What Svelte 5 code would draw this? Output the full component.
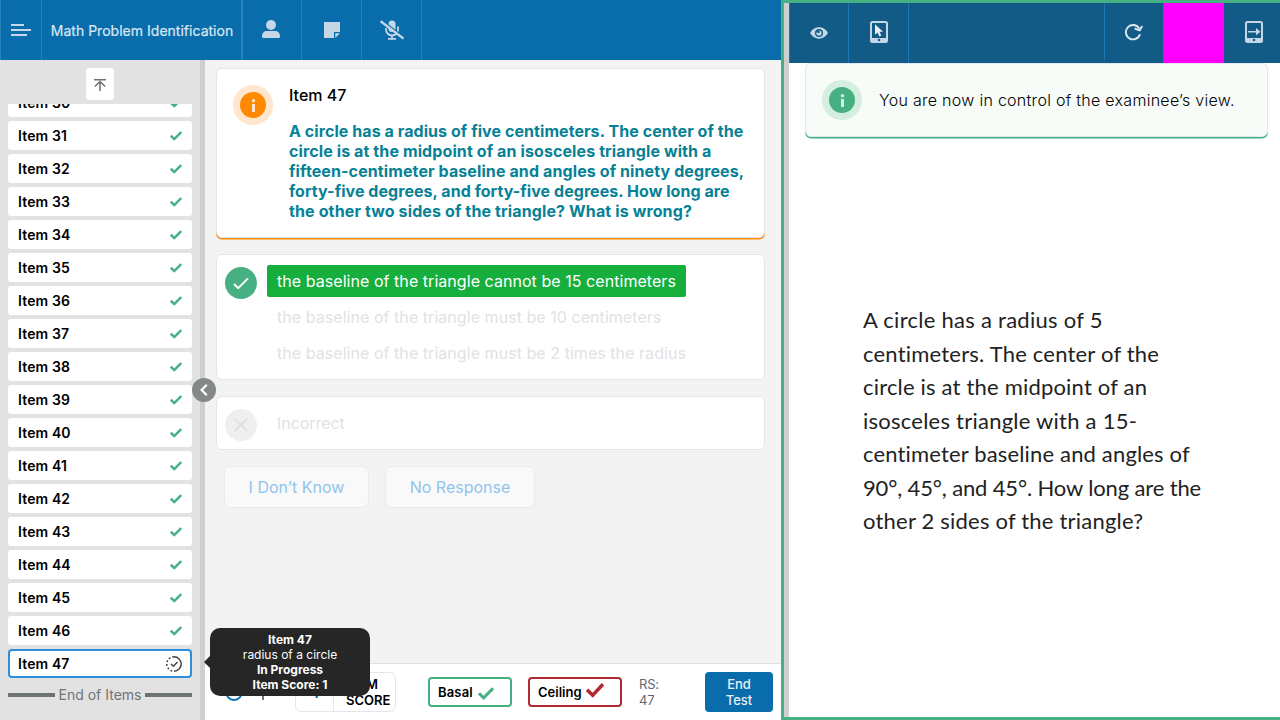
<script>
  const items = Array.from({ length: 18 }, (_, i) => 30 + i);
  const prompt = [
    ['A circle has a radius of five centimeters. The center of the', 0.068],
    ['circle is at the midpoint of an isosceles triangle with a', 0.107],
    ['fifteen-centimeter baseline and angles of ninety degrees,', 0.105],
    ['forty-five degrees, and forty-five degrees. How long are', 0.05],
    ['the other two sides of the triangle? What is wrong?', 0.125]
  ];
  const stimulus = [
    ['A circle has a radius of 5', 0.27],
    ['centimeters. The center of the', 0.21],
    ['circle is at the midpoint of an', 0.19],
    ['isosceles triangle with a 15-', 0.24],
    ['centimeter baseline and angles of', 0.16],
    ['90°, 45°, and 45°. How long are the', -0.14],
    ['other 2 sides of the triangle?', 0.21]
  ];
</script>

<div class="app">
  <main class="left">
    <header class="bar">
      <div class="cell menu">
        <svg width="20" height="12" viewBox="0 0 20 12"><path d="M0 1h13M0 6h20M0 11h16" stroke="#c5d9e9" stroke-width="2" /></svg>
      </div>
      <div class="cell title"><span>Math Problem Identification</span></div>
      <div class="cell sq person">
        <svg width="18" height="18" viewBox="0 0 18 18" fill="#c5d7e6"><circle cx="9" cy="5" r="5" /><path d="M0 16.500C0 13 2 11 5 11h8c3 0 5 2 5 5.500q0 1.500-1.500 1.500h-15Q0 18 0 16.500Z" /></svg>
      </div>
      <div class="cell sq">
        <svg width="16" height="16" viewBox="0 0 16 16" fill="#c5d7e6"><path d="M0 0h16v10h-6v6H0Z" /><path d="M11.300 11.300H16L11.300 16Z" /></svg>
      </div>
      <div class="cell sq">
        <svg width="24" height="20" viewBox="0 0 24 20" fill="none" stroke="#c5d7e6"><rect x="8.500" y="0.500" width="7" height="11.500" rx="3.500" fill="#c5d7e6" stroke="none" /><path d="M6 8v1.500a6 6 0 0 0 12 0V6.500M12 15.500V19M8 18.800h8" stroke-width="1.800" /><path d="M2 .2 25 18.200" stroke="#0a6dab" stroke-width="1.500" /><path d="M.6 1.200 23.500 18.600" stroke-width="2.200" /></svg>
      </div>
    </header>

    <div class="body">
      <nav class="side">
        <div class="top">
          <button class="up" aria-label="Top"><svg width="12" height="12" viewBox="0 0 12 12" fill="none" stroke="#6d7272" stroke-width="1.500"><path d="M0 .8h12M6 12V3M.8 7.500 6 2.600l5.200 4.900" /></svg></button>
        </div>
        <div class="list">
          {#each items as n}
            <div class="item" class:current={n === 47}>
              <span>Item {n}</span>
              {#if n === 47}
                <svg width="16" height="16" viewBox="0 0 16 16" fill="none" stroke="#444" stroke-width="1.500"><path d="M8 .8a7.200 7.200 0 0 1 0 14.400" /><path d="M8 .8a7.200 7.200 0 0 0 0 14.400" stroke-dasharray="1.800 1.970" /><path d="m5 8 2.300 2.300L11.500 6" /></svg>
              {:else}
                <svg width="12" height="10" viewBox="0 0 12 10" fill="none" stroke="#47b083" stroke-width="2.500"><path d="m.8 4.700 3.500 3.400L11.200 1" /></svg>
              {/if}
            </div>
          {/each}
          <div class="end"><i></i><span>End of Items</span><i></i></div>
        </div>
      </nav>
      <div class="split"></div>

      <section class="content">
        <div class="work">
          <article class="card question">
            <div class="halo"><b><svg width="5" height="13" viewBox="0 0 5 13" fill="#ffe6cc"><circle cx="2.500" cy="1.800" r="1.700" /><path d="M1 5h3v8H1Z" /></svg></b></div>
            <div class="qtext">
              <h1>Item 47</h1>
              <p>{#each prompt as [line, ls]}<span style="letter-spacing: {ls}px">{line}</span>{/each}</p>
            </div>
          </article>

          <article class="card answers">
            <div class="mark ok"><svg width="16" height="13" viewBox="0 0 16 13" fill="none" stroke="#fff" stroke-width="2"><path d="m1 7 4.200 4.200L15 1.400" /></svg></div>
            <div class="options">
              <div class="opt chosen">the baseline of the triangle cannot be 15 centimeters</div>
              <div class="opt">the baseline of the triangle must be 10 centimeters</div>
              <div class="opt">the baseline of the triangle must be 2 times the radius</div>
            </div>
          </article>

          <article class="card wrong">
            <div class="mark"><svg width="14" height="14" viewBox="0 0 14 14" stroke="#dfdfdf" stroke-width="1.700"><path d="m.8.800 12.400 12.400M13.200.800.800 13.200" /></svg></div>
            <span>Incorrect</span>
          </article>

          <div class="buttons">
            <button class="idk">I Don’t Know</button>
            <button class="nr">No Response</button>
          </div>
        </div>

        <footer>
          <svg class="clock" width="18" height="18" viewBox="0 0 18 18" fill="none" stroke="#0a6dab" stroke-width="2"><circle cx="9" cy="9" r="8" /></svg>
          <svg class="plus" width="14" height="18" viewBox="0 0 14 18" stroke="#444" stroke-width="1.500"><path d="M7 0v17" /></svg>
          <div class="score"><div class="num">1</div><div class="lab">ITEM<br />SCORE</div></div>
          <div class="pill basal">Basal<svg width="16" height="13" viewBox="0 0 16 13" fill="none" stroke="#47b083" stroke-width="3"><path d="m1 6.300 4.700 4.500L15 1.300" /></svg></div>
          <div class="pill ceil">Ceiling<svg width="18" height="15" viewBox="0 0 18 15" fill="none" stroke="#b02b2f" stroke-width="3.500"><path d="m1 6.800 5.700 5.500L17 1.300" /></svg></div>
          <div class="rs">RS:<br />47</div>
          <button class="finish">End<br />Test</button>
        </footer>
      </section>
    </div>

    <button class="collapse" aria-label="Collapse"><svg width="8" height="12" viewBox="0 0 8 12" fill="none" stroke="#fff" stroke-width="2.200"><path d="M6.800.800 1.600 6l5.200 5.200" /></svg></button>
    <div class="tip"><b>Item 47</b><span>radius of a circle</span><b>In Progress</b><b>Item Score: 1</b></div>
  </main>

  <aside class="right">
    <div class="gutter"></div>
    <div class="view">
      <header class="vbar">
        <div class="vcell"><svg width="18" height="12" viewBox="0 0 18 12"><path d="M0 6C2.500 2 5.500.300 9 .300S15.500 2 18 6c-2.500 4-5.500 5.700-9 5.700S2.500 10 0 6Z" fill="#c5d7e6" /><circle cx="9" cy="6" r="4" fill="#135b87" /><circle cx="9" cy="6" r="2.600" fill="#c5d7e6" /><circle cx="8.300" cy="4.800" r="1.400" fill="#135b87" /></svg></div>
        <div class="vcell tablet"><svg width="18" height="22" viewBox="0 0 18 22"><rect x="1" y="1" width="16" height="20" rx="1.500" fill="none" stroke="#c5d7e6" stroke-width="2" /><path d="M1 17h16v4H1Z" fill="#c5d7e6" /><circle cx="9" cy="19" r="1.300" fill="#135b87" /><path d="M5 3.200v10.500l2.500-2.200 1.800 4 2-.9-1.800-3.900H13Z" fill="#e8f0f6" /></svg></div>
        <div class="fill"></div>
        <div class="vcell refresh"><svg width="20" height="18" viewBox="0 0 20 18" fill="none" stroke="#dce8f1" stroke-width="1.900"><path d="M16 11.200A7.200 7.200 0 1 1 15.300 5.500" /><path d="m10.700 5.500 5 1.800L18.300 3" /></svg></div>
        <div class="pink"></div>
        <div class="vcell last"><svg width="18" height="22" viewBox="0 0 18 22"><rect x="1" y="1" width="16" height="20" rx="1.500" fill="none" stroke="#c5d7e6" stroke-width="2" /><path d="M1 17h16v4H1Z" fill="#c5d7e6" /><circle cx="9" cy="19" r="1.300" fill="#135b87" /><path d="M3 10h8V7l4.500 3.700-4.500 3.500v-2.700H3Z" fill="#c5d7e6" /></svg></div>
      </header>
      <div class="notice">
        <div class="halo green"><b><svg width="5" height="13" viewBox="0 0 5 13" fill="#d4eee0"><circle cx="2.500" cy="1.800" r="1.700" /><path d="M1 5h3v8H1Z" /></svg></b></div>
        <span>You are now in control of the examinee’s view.</span>
      </div>
      <div class="stimulus">
        {#each stimulus as [line, ls]}<div style="letter-spacing: {ls}px">{line}</div>{/each}
      </div>
    </div>
  </aside>
</div>

<style>
  :global(body) { margin: 0; overflow: hidden; }
  * { box-sizing: border-box; }
  svg { display: block; flex: none; }
  button { font: inherit; padding: 0; border: 0; }
  .app { width: 1280px; height: 720px; display: flex; font-family: Inter, sans-serif; color: #000; overflow: hidden; }
  .left { position: relative; width: 781px; display: flex; flex-direction: column; background: #f3f3f3; }
  .bar { height: 60px; display: flex; background: #0a6dab; border-left: 1px solid #2a82bd; }
  .cell { display: flex; align-items: center; justify-content: center; border-right: 1px solid #2980bb; }
  .menu { width: 41px; }
  .title { width: 201px; border-right-width: 2px; font-size: 14px; color: #d9e8f3; white-space: nowrap; padding: 0 0 0 1px; -webkit-text-stroke: 0.2px #d9e8f3; }
  .title span { letter-spacing: 0.02px; }
  .sq { width: 60px; }
  .person { width: 59px; padding-right: 2px; }
  .person svg { margin-top: -2px; }
  .body { height: 660px; display: flex; }
  .side { width: 200px; background: #e2e2e2; overflow: hidden; }
  .top { height: 44px; display: flex; justify-content: center; padding-top: 8px; }
  .up { width: 28px; height: 32px; background: #fff; border-radius: 3px; display: flex; align-items: center; justify-content: center; }
  .up svg { margin-top: 2px; }
  .list { height: 616px; overflow: hidden; padding: 0 8px; display: flex; flex-direction: column; gap: 4px; }
  .item { flex: none; height: 29px; background: #fff; border-radius: 3px; display: flex; align-items: center; justify-content: space-between; padding: 0 10px; font-size: 14px; font-weight: 600; line-height: 29px; letter-spacing: 0.12px; }
  .item:first-child { margin-top: -16px; }
  .item.current { border: 2px solid #2d8edb; padding: 0 8px; border-radius: 4px; }
  .end { display: flex; align-items: center; gap: 4px; color: #707575; font-size: 14px; height: 20px; margin-top: 3px; white-space: nowrap; }
  .end span { line-height: 18px; }
  .end i { flex: 1; height: 4px; background: #6d7272; }
  .split { width: 5px; background: #cfcfcf; }
  .content { width: 576px; display: flex; flex-direction: column; }
  .work { flex: 1; padding: 8px 16px 0 11px; }
  .card { background: #fff; border: 1px solid #e3e6ee; border-radius: 6px; display: flex; }
  .question { height: 170px; box-shadow: 0 1.500px 0 #ff8a00; padding: 16px 0 0 16px; }
  .halo { width: 40px; height: 40px; flex: none; border-radius: 50%; background: #ffe6cc; display: flex; align-items: center; justify-content: center; }
  .halo b { width: 26px; height: 26px; border-radius: 50%; background: #ff8a00; display: flex; align-items: center; justify-content: center; }
  .halo.green { background: #d4eee0; }
  .halo.green b { background: #47b083; }
  .qtext { margin-left: 16px; }
  h1 { margin: 0; font-size: 16px; line-height: 20px; font-weight: 500; }
  p { margin: 16px 0 0; font-size: 16px; line-height: 20px; font-weight: 700; color: #078196; white-space: nowrap; }
  p span { display: block; }
  .answers { height: 126px; margin-top: 16px; padding: 10px 8px; }
  .mark { width: 32px; height: 32px; flex: none; border-radius: 50%; background: #efefef; display: flex; align-items: center; justify-content: center; }
  .mark.ok { background: #47b083; margin-top: 2px; }
  .options { margin-left: 10px; display: flex; flex-direction: column; align-items: flex-start; gap: 4px; }
  .opt { height: 32px; line-height: 33px; padding: 0 10px; font-size: 16px; color: #e2e2e2; white-space: nowrap; letter-spacing: 0.05px; }
  .opt.chosen { background: #16ae3d; color: #fff; border-radius: 2px; }
  .wrong { height: 54px; margin-top: 16px; padding: 12px 8px; font-size: 16px; color: #e2e2e2; }
  .wrong span { margin-left: 20px; line-height: 29px; letter-spacing: -0.05px; }
  .buttons { display: flex; gap: 16px; margin: 16px 0 0 8px; }
  .buttons button { height: 42px; border: 1px solid #e8eaec; border-radius: 6px; background: #f9f9f9; color: #91c4ec; font-size: 16px; }
  .idk { width: 145px; }
  .nr { width: 150px; }
  footer { height: 57px; background: #fff; border-top: 1px solid #e0e0e0; display: flex; align-items: center; white-space: nowrap; }
  .clock { margin-left: 20px; }
  .plus { margin: 0 0 0 13px; }
  .score { width: 101px; height: 40px; margin-left: 25px; border: 1px solid #e3e6ee; border-radius: 6px; display: flex; font-weight: 600; font-size: 13px; line-height: 16px; flex: none; }
  .num { width: 38px; border-right: 1px solid #e3e6ee; color: #0a6dab; text-align: center; line-height: 38px; font-size: 16px; padding-left: 2px; }
  .lab { flex: 1; padding: 3px 0 0 12px; }
  .pill { height: 30px; flex: none; border: 2px solid; border-radius: 4px; display: flex; align-items: center; font-size: 13px; font-weight: 600; padding-left: 8px; }
  .pill svg { margin-left: 5px; }
  .basal { width: 84px; margin-left: 32px; border-color: #47b083; letter-spacing: 0.15px; }
  .basal svg { margin-top: 2px; }
  .ceil { width: 94px; margin-left: 16px; border-color: #b02b2f; }
  .pill.ceil svg { margin-left: 4px; margin-bottom: 4px; }
  .rs { width: 66px; margin-left: 17px; font-size: 13px; line-height: 16px; color: #626773; letter-spacing: -0.2px; }
  .finish { width: 68px; height: 40px; background: #0a6dab; color: #e6f0f7; border-radius: 4px; font-size: 13px; font-weight: 500; line-height: 16px; flex: none; }
  .collapse { position: absolute; left: 192px; top: 378px; width: 24px; height: 24px; border-radius: 50%; background: #858888; display: flex; align-items: center; justify-content: center; }
  .tip { position: absolute; left: 210px; top: 628px; width: 160px; height: 68px; border-radius: 10px; background: #262626; color: #fff; font-size: 12px; line-height: 15px; padding-top: 4px; display: flex; flex-direction: column; align-items: center; }
  .tip::before { content: ''; position: absolute; left: -6px; top: 28px; border: 6px solid transparent; border-right-color: #262626; border-left: 0; }
  .right { width: 499px; height: 720px; border: 3px solid #47b083; border-right: 0; display: flex; background: #fff; }
  .gutter { width: 5px; background: #cfcfcf; }
  .view { width: 491px; }
  .vbar { height: 60px; display: flex; background: #135b87; border-left: 1px solid #1d75ad; }
  .vcell { width: 60px; border-right: 1px solid #2078b3; display: flex; align-items: center; justify-content: center; }
  .vcell:first-child { width: 59px; }
  .tablet, .last { padding-bottom: 2px; }
  .fill { flex: 1; border-right: 1px solid #2078b3; height: 57px; }
  .vcell.refresh { width: 59px; padding-bottom: 2px; }
  .pink { width: 60px; background: #f0f; }
  .last { width: 56px; border: 0; padding-left: 3px; }
  .notice { height: 74px; width: 463px; margin-left: 16px; background: #f7fcf9; border: 1px solid #e3e6ee; box-shadow: 0 1.500px 0 #47b083; border-radius: 6px; padding: 16px; display: flex; font-size: 16px; white-space: nowrap; font-weight: 300; }
  .notice span { margin-left: 17px; line-height: 41px; letter-spacing: 0.28px; }
  .stimulus { margin: 166px 0 0 74px; font-family: Lato, sans-serif; font-size: 22px; line-height: 33.500px; color: #222; white-space: nowrap; }
  .stimulus div { height: 33.500px; }
</style>
